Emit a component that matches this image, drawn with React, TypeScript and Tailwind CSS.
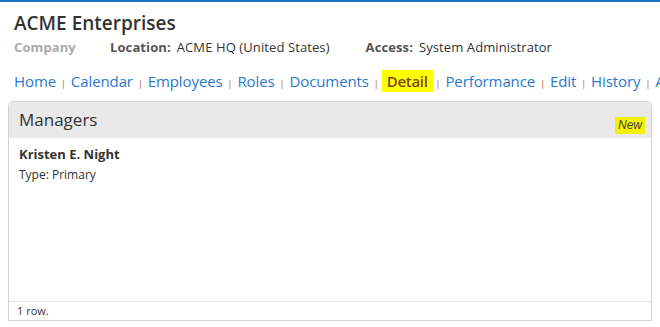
const navItems = [
  "Home",
  "Calendar",
  "Employees",
  "Roles",
  "Documents",
  "Detail",
  "Performance",
  "Edit",
  "History",
  "Accounts",
];

function NavSeparator() {
  return <span className="mx-[5px] text-[9px] text-[#b0533a] align-baseline">|</span>;
}

export default function App() {
  return (
    <div className="w-[660px] h-[327px] bg-white overflow-hidden font-['Open_Sans',sans-serif] border-t-2 border-[#1c72c9]">
      {/* Title block */}
      <div className="px-[14px] pt-[7px]">
        <h1 className="text-[19px] leading-[28px] font-semibold text-[#333]">ACME Enterprises</h1>
        <div className="flex items-baseline text-[13px] leading-[20px] tracking-[0.1px]">
          <span className="w-[96px] font-bold text-[#aaa]">Company</span>
          <span className="font-bold text-[#555]">Location:</span>
          <span className="ml-[6px] text-[#333]">ACME HQ (United States)</span>
          <span className="ml-[36px] font-bold text-[#555]">Access:</span>
          <span className="ml-[6px] text-[#333]">System Administrator</span>
        </div>
      </div>

      {/* Tabs */}
      <div className="px-[14px] mt-[14px] whitespace-nowrap text-[15px] leading-[20px] tracking-[-0.1px]">
        {navItems.map((item, i) => (
          <span key={item}>
            {i > 0 && <NavSeparator />}
            {item === "Detail" ? (
              <span className="-mx-[2px] bg-[#ffff00] px-[5px] py-[1px] font-semibold tracking-[-0.3px] text-[#7a4a00]">
                {item}
              </span>
            ) : (
              <a className="text-[#2a78d2]">{item}</a>
            )}
          </span>
        ))}
      </div>

      {/* Managers panel */}
      <div className="mx-[8px] mt-[7px] h-[220px] flex flex-col border border-[#d2d2d2] rounded-t-[5px]">
        <div className="h-[36px] bg-[#e9e9e9] flex items-center justify-between pl-[10px] pr-[6px] rounded-t-[5px]">
          <span className="text-[17px] text-[#333]">Managers</span>
          <span className="mt-[10px] bg-[#f2f200] px-[3px] text-[12px] leading-[17px] italic text-[#444] font-['Liberation_Sans',sans-serif]">
            New
          </span>
        </div>
        <div className="flex-1 px-[10px] pt-[7px]">
          <div className="text-[13px] leading-[18px] font-bold text-[#333]">Kristen E. Night</div>
          <div className="text-[12px] leading-[16px] mt-[4px] text-[#333]">Type: Primary</div>
        </div>
        <div className="border-t border-[#e5e5e5] h-[19px] px-[8px] text-[11px] leading-[18px] text-[#333]">
          1 row.
        </div>
      </div>
    </div>
  );
}
